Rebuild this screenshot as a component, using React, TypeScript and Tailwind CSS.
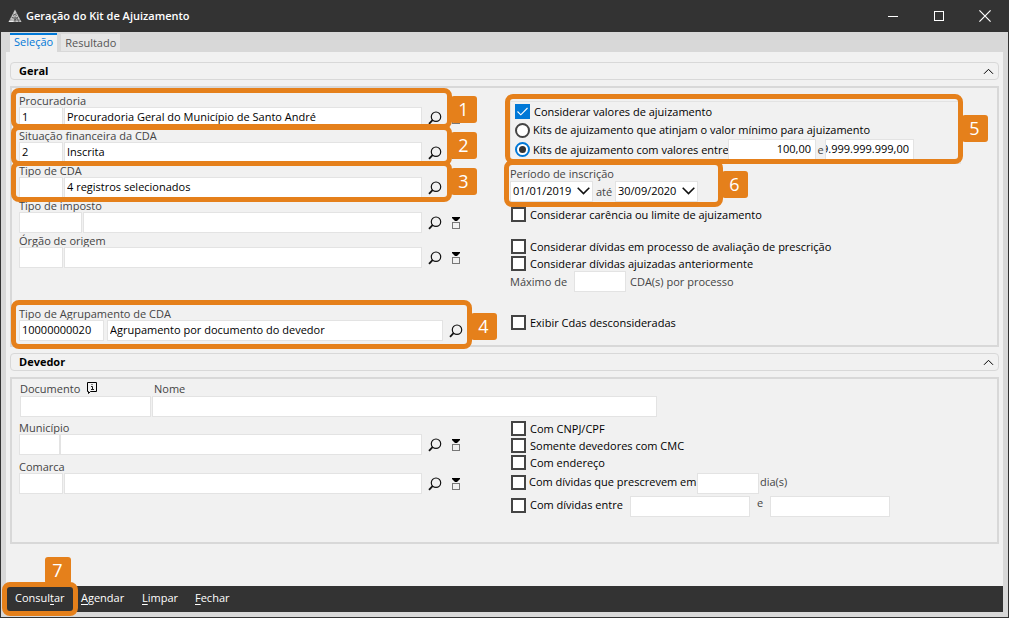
import { useId, type ReactNode } from "react";

const boxClass =
  "block h-[21px] min-w-0 border border-[#e3e3e3] bg-white pb-[2px] text-[11px] text-black outline-none";

function Logo() {
  return (
    <svg width="14" height="14" viewBox="0 0 14 14" aria-hidden="true">
      <path d="M7 0.5 L13.5 13 H0.5 Z" fill="#c4c4c4" />
      <path d="M7 0.5 L6.4 8 L0.5 13 H5 L6.8 9 Z" fill="#ffffff" opacity="0.7" />
      <path
        d="M5.2 5 L9 6.5 M8.8 4 L5 7 M3.5 8 L7.5 10.5 M10.5 7.5 L6.5 11 M2 11 H12 M4 8.8 H10 M9 9 L11 13 M7 7 V13"
        stroke="#333333"
        strokeWidth="0.55"
        fill="none"
      />
    </svg>
  );
}

function SearchButton() {
  return (
    <button type="button" aria-label="Pesquisar" className="ml-[6px] grid h-[21px] w-[14px] shrink-0 place-items-center">
      <svg width="14" height="14" viewBox="0 0 14 14" fill="none" stroke="#111111" aria-hidden="true">
        <circle cx="8" cy="5.7" r="4.7" strokeWidth="1.2" />
        <path d="M4.8 8.9 L1 12.8" strokeWidth="1.8" />
      </svg>
    </button>
  );
}

function FilterButton() {
  return (
    <button
      type="button"
      aria-label="Selecionar vários"
      className="ml-[9px] grid h-[21px] w-[10px] shrink-0 place-items-center pt-[2px]"
    >
      <svg width="10" height="13" viewBox="0 0 10 13" aria-hidden="true">
        <path d="M1 0 H9 V1 L6 4 H4 L1 1 Z" fill="#000000" />
        <rect x="1.5" y="5.5" width="7" height="6" fill="#f1f1f1" stroke="#777777" />
      </svg>
    </button>
  );
}

function Callout({ n, box, badge }: { n: number; box: string; badge: string }) {
  return (
    <div className={`pointer-events-none absolute z-10 rounded-lg border-[5px] border-[#e5801b] ${box}`}>
      <span
        className={`absolute grid h-[27px] w-[26px] place-items-center rounded-[3px] bg-[#e5801b] pr-px pb-px text-lg leading-none text-white ${badge}`}
      >
        {n}
      </span>
    </div>
  );
}

type LookupProps = {
  label: string;
  code?: string;
  text?: string;
  codeClass?: string;
  textClass?: string;
  filter?: boolean;
  className?: string;
  children?: ReactNode;
};

function Lookup({
  label,
  code = "",
  text = "",
  codeClass = "w-[44px]",
  textClass = "ml-px w-[358px]",
  filter = true,
  className = "",
  children,
}: LookupProps) {
  const id = useId();
  return (
    <div className={`relative ${className}`}>
      <label htmlFor={id} className="block h-[14px] leading-4 text-[#444444]">
        {label}
      </label>
      <div className="flex">
        <input id={id} defaultValue={code} className={`${boxClass} px-[2px] ${codeClass}`} />
        <input
          aria-label={`${label}: descrição`}
          defaultValue={text}
          className={`${boxClass} px-[2px] ${textClass}`}
        />
        <SearchButton />
        {filter && <FilterButton />}
      </div>
      {children}
    </div>
  );
}

function Check({
  label,
  checked = false,
  className = "h-[17px] gap-1 pl-px",
}: {
  label: string;
  checked?: boolean;
  className?: string;
}) {
  return (
    <label className={`flex items-center whitespace-nowrap text-black ${className}`}>
      <span className="grid shrink-0">
        <input
          type="checkbox"
          defaultChecked={checked}
          className="peer col-start-1 row-start-1 size-[15px] appearance-none border-2 border-[#444444] bg-white checked:border-[#0078d7] checked:bg-[#0078d7]"
        />
        <svg
          viewBox="0 0 15 15"
          className="pointer-events-none invisible col-start-1 row-start-1 size-[15px] peer-checked:visible"
          fill="none"
          stroke="#ffffff"
          strokeWidth="1.1"
          aria-hidden="true"
        >
          <path d="M2.5 7.5 L5.8 10.8 L12.5 4" />
        </svg>
      </span>
      {label}
    </label>
  );
}

function Radio({ label, checked = false, className = "" }: { label: string; checked?: boolean; className?: string }) {
  return (
    <label className={`flex items-center gap-[3px] whitespace-nowrap text-black ${className}`}>
      <span className="grid shrink-0 place-items-center">
        <input
          type="radio"
          name="kit"
          defaultChecked={checked}
          className="peer col-start-1 row-start-1 size-[15px] appearance-none rounded-full border-2 border-[#444444] bg-white checked:border-[#0078d7]"
        />
        <span className="pointer-events-none invisible col-start-1 row-start-1 size-[7px] rounded-full bg-[#333333] peer-checked:visible" />
      </span>
      {label}
    </label>
  );
}

function DateSelect({ id, label, value }: { id?: string; label?: string; value: string }) {
  return (
    <span className="grid w-[83px]">
      <select
        id={id}
        aria-label={label}
        defaultValue={value}
        className={`${boxClass} col-start-1 row-start-1 w-full appearance-none px-[2px]`}
      >
        <option>{value}</option>
      </select>
      <svg
        viewBox="0 0 13 8"
        className="pointer-events-none col-start-1 row-start-1 mr-[3px] mb-[2px] h-2 w-[13px] self-center justify-self-end"
        fill="none"
        stroke="#111111"
        strokeWidth="1.6"
        aria-hidden="true"
      >
        <path d="M0.7 0.8 L6.5 6.6 L12.3 0.8" />
      </svg>
    </span>
  );
}

function SectionHeader({ title, className }: { title: string; className: string }) {
  return (
    <h2 className={className}>
      <button
        type="button"
        className="flex h-[18px] w-full items-center justify-between rounded-[4px] border border-[#d8d8d8] pr-[4px] pl-[8px] font-bold text-black"
      >
        {title}
        <svg width="11" height="7" viewBox="0 0 11 7" fill="none" stroke="#000000" strokeWidth="1" aria-hidden="true">
          <path d="M1 5.8 L5.5 1.3 L10 5.8" />
        </svg>
      </button>
    </h2>
  );
}

export default function App() {
  return (
    <div className="flex min-h-screen flex-col border-x border-b border-[#333333] bg-[#d8d8d8] font-['Open_Sans','Noto_Sans',sans-serif] text-[11px] leading-[14px] text-[#444444]">
      <header className="flex h-8 items-center bg-[#333333] pl-[7px] text-white">
        <Logo />
        <h1 className="ml-1 grow font-semibold">Geração do Kit de Ajuizamento</h1>
        <div className="flex">
          <button type="button" aria-label="Minimizar" className="grid h-8 w-[46px] place-items-center">
            <svg width="10" height="11" viewBox="0 0 10 11" stroke="#ffffff" aria-hidden="true">
              <path d="M0 5.5 H10" />
            </svg>
          </button>
          <button type="button" aria-label="Maximizar" className="grid h-8 w-[46px] place-items-center">
            <svg width="10" height="10" viewBox="0 0 10 10" stroke="#ffffff" fill="none" aria-hidden="true">
              <rect x="0.5" y="0.5" width="9" height="9" />
            </svg>
          </button>
          <button type="button" aria-label="Fechar janela" className="grid h-8 w-[46px] place-items-center">
            <svg width="12" height="12" viewBox="0 0 12 12" stroke="#ffffff" strokeWidth="1.2" aria-hidden="true">
              <path d="M0.4 0.4 L11.6 11.6 M11.6 0.4 L0.4 11.6" />
            </svg>
          </button>
        </div>
      </header>

      <div className="flex grow flex-col px-[5px] pb-[5px]">
        <nav className="flex h-5 items-end gap-1 pl-1">
          <button
            type="button"
            className="h-[19px] border-t-2 border-[#0078d7] bg-[#f1f1f1] px-1 pb-[3px] text-[#0078d7]"
          >
            Seleção
          </button>
          <button type="button" className="mb-px h-[17px] bg-[#e6e6e6] px-1 text-[#555555]">
            Resultado
          </button>
        </nav>

        <main className="grow bg-[#f1f1f1] px-1 pt-[10px]">
          <SectionHeader title="Geral" className="mb-[6px]" />
          <section className="flex border-2 border-[#d8d8d8] pb-1 pl-[7px]">
            <div className="w-[491px] shrink-0 pt-[5px]">
              <Lookup label="Procuradoria" code="1" text="Procuradoria Geral do Município de Santo André">
                <Callout n={1} box="-top-[5px] -left-2 h-[41px] w-[441px]" badge="top-[3px] -right-[30px]" />
              </Lookup>
              <Lookup label="Situação financeira da CDA" code="2" text="Inscrita">
                <Callout n={2} box="-top-[3px] -left-2 h-[41px] w-[441px]" badge="top-[2px] -right-[30px]" />
              </Lookup>
              <Lookup label="Tipo de CDA" text="4 registros selecionados">
                <Callout n={3} box="-top-[2px] -left-2 h-[41px] w-[441px]" badge="top-[2px] -right-[30px]" />
              </Lookup>
              <Lookup label="Tipo de imposto" codeClass="w-[63px]" textClass="ml-px w-[339px]" />
              <Lookup label="Órgão de origem" />
              <Lookup
                label="Tipo de Agrupamento de CDA"
                code="10000000020"
                text="Agrupamento por documento do devedor"
                codeClass="w-[85px]"
                textClass="ml-[3px] w-[336px]"
                filter={false}
                className="mt-[38px]"
              >
                <Callout n={4} box="-top-[6px] -left-2 h-[49px] w-[461px]" badge="top-[8px] -right-[30px]" />
              </Lookup>
            </div>

            <div className="min-w-0 grow pt-[13px]">
              <fieldset className="relative h-[63px] w-[451px] border border-[#e3e3e3] pl-1">
                <Check label="Considerar valores de ajuizamento" checked className="h-[19px] gap-1" />
                <Radio label="Kits de ajuizamento que atinjam o valor mínimo para ajuizamento" className="h-[18px]" />
                <div className="flex h-[21px] items-center">
                  <Radio label="Kits de ajuizamento com valores entre" checked className="w-[213px]" />
                  <input
                    aria-label="Valor inicial"
                    defaultValue="100,00"
                    className={`${boxClass} w-[88px] pr-[4px] text-right`}
                  />
                  <span className="w-[9px] text-center">e</span>
                  <input
                    aria-label="Valor final"
                    dir="rtl"
                    defaultValue="99.999.999.999,00"
                    className={`${boxClass} w-[89px] pr-[4px]`}
                  />
                </div>
                <Callout n={5} box="-top-[8px] -left-[6px] h-[70px] w-[458px]" badge="top-[16px] -right-[30px]" />
              </fieldset>
              <div className="relative">
                <label htmlFor="inicio" className="block h-[17px] pt-[3px]">
                  Período de inscrição
                </label>
                <div className="flex items-center">
                  <DateSelect id="inicio" value="01/01/2019" />
                  <span className="w-[22px] text-center">até</span>
                  <DateSelect label="Data final" value="30/09/2020" />
                </div>
                <Callout n={6} box="-top-[4px] -left-[6px] h-[47px] w-[219px]" badge="top-[6px] -right-[30px]" />
              </div>
              <Check label="Considerar carência ou limite de ajuizamento" className="mt-1 h-[17px] gap-1 pl-px" />
              <Check
                label="Considerar dívidas em processo de avaliação de prescrição"
                className="mt-[15px] h-[17px] gap-1 pl-px"
              />
              <Check label="Considerar dívidas ajuizadas anteriormente" />
              <div className="-mt-px flex items-center">
                <label htmlFor="maximo" className="w-16">
                  Máximo de
                </label>
                <input id="maximo" className={`${boxClass} w-[52px] px-[2px]`} />
                <span className="ml-1">CDA(s) por processo</span>
              </div>
              <Check label="Exibir Cdas desconsideradas" className="mt-[22px] h-[17px] gap-1 pl-px" />
            </div>
          </section>

          <SectionHeader title="Devedor" className="my-[6px]" />
          <section className="border-2 border-[#d8d8d8] pb-[25px] pl-[7px]">
            <div className="flex gap-px pl-px">
              <div className="w-[131px]">
                <div className="flex h-[17px] items-center gap-[7px]">
                  <label htmlFor="documento" className="pt-[2px]">
                    Documento
                  </label>
                  <svg width="10" height="12" viewBox="0 0 10 12" fill="none" stroke="#000000" aria-hidden="true">
                    <path d="M0.5 0.5 H9.5 V9.5 H3.5 L1.5 11.5 V9.5 H0.5 Z" />
                    <path d="M4 4.5 H5.5 V7 M4 7.5 H7 M4.5 2.5 H5.5" strokeWidth="0.9" />
                  </svg>
                </div>
                <input id="documento" className={`${boxClass} w-full px-[2px]`} />
              </div>
              <div className="w-[505px]">
                <label htmlFor="nome" className="flex h-[17px] items-center pt-[2px] pl-[2px]">
                  Nome
                </label>
                <input id="nome" className={`${boxClass} w-full px-[2px]`} />
              </div>
            </div>
            <div className="flex pt-[3px]">
              <div className="w-[491px] shrink-0">
                <Lookup label="Município" codeClass="w-[41px]" textClass="w-[362px]" />
                <Lookup label="Comarca" className="mt-1" />
              </div>
              <div className="min-w-0 grow">
                <Check label="Com CNPJ/CPF" />
                <Check label="Somente devedores com CMC" />
                <Check label="Com endereço" />
                <div className="mt-[2px] flex">
                  <Check label="Com dívidas que prescrevem em" className="h-[18px] w-[187px] gap-[3px] pl-px" />
                  <input aria-label="Dias para prescrição" className={`${boxClass} w-[62px] px-[2px]`} />
                  <span className="ml-px pt-[2px]">dia(s)</span>
                </div>
                <div className="mt-[2px] flex">
                  <Check label="Com dívidas entre" className="h-[18px] w-[120px] gap-1 pl-px" />
                  <input aria-label="Dívida inicial" className={`${boxClass} w-[120px] px-[2px]`} />
                  <span className="w-5 text-center">e</span>
                  <input aria-label="Dívida final" className={`${boxClass} w-[120px] px-[2px]`} />
                </div>
              </div>
            </div>
          </section>
        </main>

        <footer className="flex h-[26px] items-center bg-[#333333] pb-[2px] pl-[9px] text-white">
          <div className="relative w-[66px]">
            <button type="button">
              Consul<u className="underline-offset-2">t</u>ar
            </button>
            <Callout n={7} box="-top-[9px] -left-[13px] h-[34px] w-[76px]" badge="-top-[30px] left-[38px]" />
          </div>
          <button type="button" className="w-[61px] text-left">
            <u className="underline-offset-2">A</u>gendar
          </button>
          <button type="button" className="w-[53px] text-left">
            <u className="underline-offset-2">L</u>impar
          </button>
          <button type="button">
            <u className="underline-offset-2">F</u>echar
          </button>
        </footer>
      </div>
    </div>
  );
}
